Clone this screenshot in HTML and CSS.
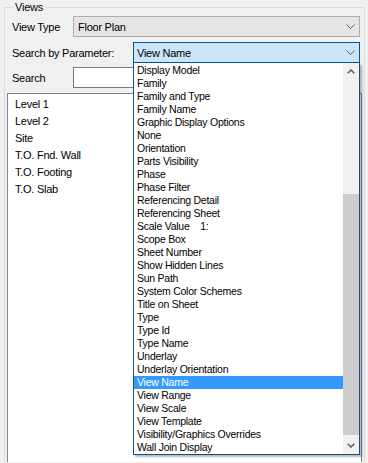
FILE: index.html
```html
<!DOCTYPE html>
<html>
<head>
<meta charset="utf-8">
<link rel="stylesheet" href="styles.css">
</head>
<body>
<fieldset class="group">
  <legend class="group-title">Views</legend>
  <div class="row row-first">
    <span class="label label-short">View Type</span>
    <div class="combo combo-gray">
      <span class="combo-text">Floor Plan</span>
      <svg class="chevron" width="9" height="5" viewBox="0 0 9 5"><polyline points="0.5,0.5 4.5,4.5 8.5,0.5" fill="none" stroke="#606060" stroke-width="1"/></svg>
    </div>
  </div>
  <div class="row row-second">
    <span class="label label-wide">Search by Parameter:</span>
    <div class="combo-wrap">
      <div class="combo combo-active">
        <span class="combo-text">View Name</span>
        <svg class="chevron" width="9" height="5" viewBox="0 0 9 5"><polyline points="0.5,0.5 4.5,4.5 8.5,0.5" fill="none" stroke="#606060" stroke-width="1"/></svg>
      </div>
      <div class="dropdown">
        <ul class="options">
          <li>Display Model</li>
          <li>Family</li>
          <li>Family and Type</li>
          <li>Family Name</li>
          <li>Graphic Display Options</li>
          <li>None</li>
          <li>Orientation</li>
          <li>Parts Visibility</li>
          <li>Phase</li>
          <li>Phase Filter</li>
          <li>Referencing Detail</li>
          <li>Referencing Sheet</li>
          <li>Scale Value&nbsp;&nbsp;&nbsp;&nbsp;1:</li>
          <li>Scope Box</li>
          <li>Sheet Number</li>
          <li>Show Hidden Lines</li>
          <li>Sun Path</li>
          <li>System Color Schemes</li>
          <li>Title on Sheet</li>
          <li>Type</li>
          <li>Type Id</li>
          <li>Type Name</li>
          <li>Underlay</li>
          <li>Underlay Orientation</li>
          <li class="selected">View Name</li>
          <li>View Range</li>
          <li>View Scale</li>
          <li>View Template</li>
          <li>Visibility/Graphics Overrides</li>
          <li>Wall Join Display</li>
        </ul>
        <div class="vscroll">
          <div class="vscroll-btn">
            <svg width="8" height="5" viewBox="0 0 8 5"><polyline points="0.7,4.3 4,1 7.3,4.3" fill="none" stroke="#606060" stroke-width="1.6"/></svg>
          </div>
          <div class="vscroll-track">
            <div class="vscroll-thumb"></div>
          </div>
          <div class="vscroll-btn">
            <svg width="8" height="5" viewBox="0 0 8 5"><polyline points="0.7,0.7 4,4 7.3,0.7" fill="none" stroke="#606060" stroke-width="1.6"/></svg>
          </div>
        </div>
      </div>
    </div>
  </div>
  <div class="row row-third">
    <span class="label label-short">Search</span>
    <div class="textbox"></div>
  </div>
  <ul class="listbox">
    <li>Level 1</li>
    <li>Level 2</li>
    <li>Site</li>
    <li>T.O. Fnd. Wall</li>
    <li>T.O. Footing</li>
    <li>T.O. Slab</li>
  </ul>
</fieldset>
</body>
</html>
```
FILE: styles.css
```css
html, body {
  margin: 0;
  padding: 0;
  height: 463px;
  overflow: hidden;
  background: #f0f0f0;
  font-family: "Liberation Sans", Arial, sans-serif;
  color: #000;
}

.group {
  margin: 0 3px 0 4px;
  padding: 0 2px 0 2px;
  border: 1px solid #dcdcdc;
  border-bottom: none;
  height: 463px;
  box-sizing: border-box;
}

.group-title {
  margin-left: 7px;
  padding: 0 2px 0 1px;
  font-size: 11px;
  line-height: 14px;
  letter-spacing: -0.2px;
}

.row {
  display: flex;
  align-items: center;
  height: 21px;
  padding: 0 2px 0 5px;
  font-size: 11px;
  letter-spacing: -0.25px;
}

.row-first { margin-top: 2px; }
.row-second { margin-top: 5px; position: relative; z-index: 2; }
.row-third { margin-top: 4px; }

.label { flex: none; }
.label-short { width: 61px; }
.label-wide { width: 121px; }

.combo-wrap {
  flex: 1;
  position: relative;
  height: 21px;
}

.combo {
  flex: 1;
  height: 21px;
  box-sizing: border-box;
  border: 1px solid #adadad;
  display: flex;
  align-items: center;
  justify-content: space-between;
  padding: 0 4px 0 4px;
}

.combo-gray {
  background: #e5e5e5;
}

.combo-active {
  background: #cce4f7;
  border-color: #005499;
  padding-left: 3px;
}

.combo-text {
  line-height: 14px;
}

.chevron {
  display: block;
}

.dropdown {
  position: absolute;
  left: 0;
  right: 0;
  top: 21px;
  display: flex;
  background: #fff;
  border: 1px solid #005499;
  border-top: none;
  box-shadow: 2px 2px 2px rgba(0, 0, 0, 0.28);
  letter-spacing: normal;
}

.options {
  flex: 1;
  list-style: none;
  margin: 0;
  padding: 1px 0 0 0;
  font-size: 10.5px;
  letter-spacing: -0.25px;
}

.options li {
  height: 13px;
  line-height: 13px;
  padding-left: 3px;
  white-space: nowrap;
}

.options li.selected {
  background: #3399ff;
  color: #fff;
}

.vscroll {
  width: 16px;
  flex: none;
  display: flex;
  flex-direction: column;
  background: #f0f0f0;
}

.vscroll-btn {
  height: 17px;
  display: flex;
  align-items: center;
  justify-content: center;
  flex: none;
}

.vscroll-track {
  flex: 1;
  display: flex;
  flex-direction: column;
}

.vscroll-thumb {
  margin-top: 114px;
  height: 241px;
  background: #cdcdcd;
}

.textbox {
  flex: 1;
  height: 21px;
  box-sizing: border-box;
  border: 1px solid #7a7a7a;
  background: #fff;
}

.listbox {
  list-style: none;
  margin: 5px 0 0 0;
  padding: 2px 0 0 0;
  border: 1px solid #828790;
  border-bottom: none;
  background: #fff;
  height: 369px;
  box-sizing: border-box;
  font-size: 11px;
  letter-spacing: -0.25px;
}

.listbox li {
  height: 17px;
  line-height: 17px;
  padding-left: 7px;
}
```
